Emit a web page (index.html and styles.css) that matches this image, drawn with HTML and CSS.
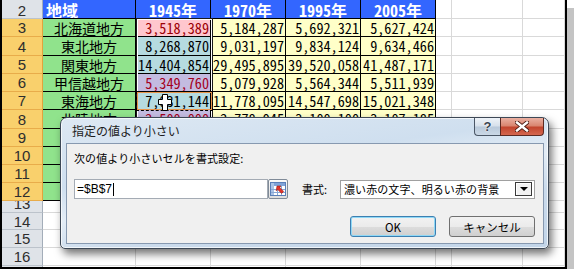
FILE: index.html
```html
<!DOCTYPE html>
<html lang="ja">
<head>
    <meta charset="UTF-8">
    <title>指定の値より小さい</title>
    <link rel="stylesheet" href="styles.css">
</head>
<body>
    <div class="screen">
        <div class="sheet">
            <!-- row 2 -->
            <div class="c rh top">2</div>
            <div class="c t hd lft">地域</div>
            <div class="c t hd">1945年</div>
            <div class="c t hd">1970年</div>
            <div class="c t hd">1995年</div>
            <div class="c t hd">2005年</div>
            <div class="c"></div><div class="c"></div><div class="c"></div>
            <!-- row 3 -->
            <div class="c rh on">3</div>
            <div class="c t area">北海道地方</div>
            <div class="c t n act">3,518,389</div>
            <div class="c t n">5,184,287</div>
            <div class="c t n">5,692,321</div>
            <div class="c t n">5,627,424</div>
            <div class="c"></div><div class="c"></div><div class="c"></div>
            <!-- row 4 -->
            <div class="c rh on">4</div>
            <div class="c t area">東北地方</div>
            <div class="c t n s">8,268,870</div>
            <div class="c t n">9,031,197</div>
            <div class="c t n">9,834,124</div>
            <div class="c t n">9,634,466</div>
            <div class="c"></div><div class="c"></div><div class="c"></div>
            <!-- row 5 -->
            <div class="c rh on">5</div>
            <div class="c t area">関東地方</div>
            <div class="c t n s">14,404,854</div>
            <div class="c t n">29,495,895</div>
            <div class="c t n">39,520,058</div>
            <div class="c t n">41,487,171</div>
            <div class="c"></div><div class="c"></div><div class="c"></div>
            <!-- row 6 -->
            <div class="c rh on">6</div>
            <div class="c t area">甲信越地方</div>
            <div class="c t n bad">5,349,760</div>
            <div class="c t n">5,079,928</div>
            <div class="c t n">5,564,344</div>
            <div class="c t n">5,511,939</div>
            <div class="c"></div><div class="c"></div><div class="c"></div>
            <!-- row 7 -->
            <div class="c rh on">7</div>
            <div class="c t area">東海地方</div>
            <div class="c t n s">7,031,144</div>
            <div class="c t n">11,778,095</div>
            <div class="c t n">14,547,698</div>
            <div class="c t n">15,021,348</div>
            <div class="c"></div><div class="c"></div><div class="c"></div>
            <!-- row 8 -->
            <div class="c rh on">8</div>
            <div class="c t area">北陸地方</div>
            <div class="c t n bad">2,500,000</div>
            <div class="c t n">2,778,945</div>
            <div class="c t n">3,100,100</div>
            <div class="c t n">3,107,185</div>
            <div class="c"></div><div class="c"></div><div class="c"></div>
            <!-- row 9 -->
            <div class="c rh on">9</div>
            <div class="c t area">近畿地方</div>
            <div class="c t n s">11,100,000</div>
            <div class="c t n">18,400,000</div>
            <div class="c t n">22,300,000</div>
            <div class="c t n">22,700,000</div>
            <div class="c"></div><div class="c"></div><div class="c"></div>
            <!-- row 10 -->
            <div class="c rh on">10</div>
            <div class="c t area">中国地方</div>
            <div class="c t n bad">5,500,000</div>
            <div class="c t n">7,100,000</div>
            <div class="c t n">7,700,000</div>
            <div class="c t n">7,600,000</div>
            <div class="c"></div><div class="c"></div><div class="c"></div>
            <!-- row 11 -->
            <div class="c rh on">11</div>
            <div class="c t area">四国地方</div>
            <div class="c t n bad">3,300,000</div>
            <div class="c t n">3,900,000</div>
            <div class="c t n">4,200,000</div>
            <div class="c t n">4,100,000</div>
            <div class="c"></div><div class="c"></div><div class="c"></div>
            <!-- row 12 -->
            <div class="c rh on">12</div>
            <div class="c t area">九州地方</div>
            <div class="c t n s">11,200,000</div>
            <div class="c t n">12,800,000</div>
            <div class="c t n">14,700,000</div>
            <div class="c t n">14,600,000</div>
            <div class="c"></div><div class="c"></div><div class="c"></div>
            <!-- rows 13 - 17 -->
            <div class="c rh cut">13</div>
            <div class="c"></div><div class="c"></div><div class="c"></div><div class="c"></div>
            <div class="c"></div><div class="c"></div><div class="c"></div><div class="c"></div>
            <div class="c rh">14</div>
            <div class="c"></div><div class="c"></div><div class="c"></div><div class="c"></div>
            <div class="c"></div><div class="c"></div><div class="c"></div><div class="c"></div>
            <div class="c rh">15</div>
            <div class="c"></div><div class="c"></div><div class="c"></div><div class="c"></div>
            <div class="c"></div><div class="c"></div><div class="c"></div><div class="c"></div>
            <div class="c rh">16</div>
            <div class="c"></div><div class="c"></div><div class="c"></div><div class="c"></div>
            <div class="c"></div><div class="c"></div><div class="c"></div><div class="c"></div>
            <div class="c rh">17</div>
            <div class="c"></div><div class="c"></div><div class="c"></div><div class="c"></div>
            <div class="c"></div><div class="c"></div><div class="c"></div><div class="c"></div>
        </div>

        <!-- selection and copy marquee -->
        <div class="range"></div>
        <div class="marquee"></div>
        <svg class="cursor" width="14" height="17" viewBox="0 0 14 17">
            <polygon points="4.5,0.5 9.5,0.5 9.5,5.5 13.5,5.5 13.5,10.5 9.5,10.5 9.5,16.5 4.5,16.5 4.5,10.5 0.5,10.5 0.5,5.5 4.5,5.5" fill="#fff" stroke="#000"/>
        </svg>

        <div class="dialog">
            <div class="titlebar">
                <span class="title">指定の値より小さい</span>
                <div class="caps">
                    <span class="cap help">?</span>
                    <span class="cap close">
                        <svg width="14" height="11" viewBox="0 0 14 11">
                            <path d="M2 1.5 L12 9.5 M12 1.5 L2 9.5" stroke="#4a1a12" stroke-width="4.2" stroke-linecap="square"/>
                            <path d="M2 1.5 L12 9.5 M12 1.5 L2 9.5" stroke="#fff" stroke-width="2.4" stroke-linecap="square"/>
                        </svg>
                    </span>
                </div>
            </div>
            <div class="client">
                <p class="prompt">次の値より小さいセルを書式設定:</p>
                <div class="fields">
                    <div class="refedit">=$B$7<span class="caret"></span></div>
                    <span class="collapse">
                        <svg width="16" height="14" viewBox="0 0 16 14">
                            <rect x="0.5" y="0.5" width="15" height="13" fill="#fff" stroke="#5a7fb8"/>
                            <rect x="1" y="1" width="14" height="3" fill="#7fa3d8"/>
                            <rect x="1" y="1" width="3" height="12" fill="#a9c2e6"/>
                            <path d="M1 7.5 H15 M1 10.5 H15 M7.5 4 V13 M11.5 4 V13" stroke="#8aa8d4"/>
                            <path d="M7 4 L11 4 L9.8 5.6 L13.6 9.4 L11.6 11.4 L7.8 7.6 L6.2 8.8 Z" fill="#e0332a" stroke="#a01810" stroke-width="0.6"/>
                        </svg>
                    </span>
                    <span class="lbl">書式:</span>
                    <div class="combo">
                        <span>濃い赤の文字、明るい赤の背景</span>
                        <span class="drop"></span>
                    </div>
                </div>
                <div class="actions">
                    <button class="btn def">OK</button>
                    <button class="btn">キャンセル</button>
                </div>
            </div>
        </div>
    </div>
</body>
</html>
```

FILE: styles.css
```css
body {
    margin: 0;
    background: #fff;
    font-family: "Noto Sans CJK JP", sans-serif;
}
.screen {
    position: relative;
    width: 563px;
    height: 267px;
    border: 2px solid #000;
    border-top: 0;
    overflow: hidden;
    background: #fff;
    box-shadow: 7px 8px 0 #c4c4c4;
}
.sheet {
    display: grid;
    grid-template-columns: 41px 93px 75px 75px 75px 75px 16px 71px 42px;
    grid-template-rows: 22px 18px 19px 18px 18px 18px 19px 18px 18px 18px 18px 12px 17px 18px 18px 18px;
    margin-top: -3px;
}
.c {
    box-sizing: border-box;
    display: flex;
    align-items: center;
    overflow: hidden;
    white-space: nowrap;
    border-right: 1px solid #d9d9d9;
    border-bottom: 1px solid #d9d9d9;
}
.rh {
    justify-content: center;
    font: 15px "Liberation Sans", sans-serif;
    color: #2e2e2e;
    background: #dfe3e8;
    border-right-color: #a3adb9;
    border-bottom-color: #bcc3cb;
}
.rh.top {
    padding-top: 6px;
}
.rh.on {
    background: #f9d06c;
    border-right-color: #e3a23c;
    border-bottom-color: #e8ac4a;
}
.rh.cut {
    align-items: flex-end;
    line-height: 17px;
}
.t {
    border-color: #000;
}
.hd {
    justify-content: center;
    background: #3366ff;
    color: #fff;
    font-size: 16px;
    font-weight: bold;
    font-feature-settings: "hwid";
    padding-top: 5px;
}
.hd.lft {
    justify-content: flex-start;
    padding-left: 3px;
}
.area {
    justify-content: center;
    background: #90e38c;
    font-size: 14px;
}
.n {
    justify-content: flex-end;
    padding-right: 1px;
    background: #ffffc8;
    font-size: 14.2px;
    font-feature-settings: "hwid";
    color: #000;
}
.n.s {
    background: #b6dbe0;
}
.n.bad {
    background: #c3bbe0;
    color: #a3001c;
}
.n.act {
    background: #ffc7ce;
    color: #9c0006;
}

.range {
    position: absolute;
    left: 134px;
    top: 18px;
    width: 77px;
    height: 184px;
    box-sizing: border-box;
    border: 1px solid #1a1a1a;
    box-shadow: inset 0 0 0 1px #fff;
}
.marquee {
    position: absolute;
    left: 134px;
    top: 91px;
    width: 77px;
    height: 20px;
    box-sizing: border-box;
    border: 1px dashed #000;
    box-shadow: inset 0 0 0 1px #e9954a;
}
.cursor {
    position: absolute;
    left: 156px;
    top: 94px;
}

/* dialog */
.dialog {
    position: absolute;
    left: 58px;
    top: 117px;
    width: 489px;
    height: 132px;
    box-sizing: border-box;
    display: flex;
    flex-direction: column;
    padding: 0 4px 4px 5px;
    border: 1px solid #3d4856;
    border-radius: 7px 7px 5px 5px;
    background: linear-gradient(172deg, #dde8f3 0%, #cfdfef 35%, #e4edf6 52%, #cbdbec 70%, #c2d5e9 100%);
    box-shadow: 3px 5px 9px rgba(0, 0, 0, 0.55), inset 0 0 0 1px rgba(255, 255, 255, 0.7);
}
.titlebar {
    height: 25px;
    display: flex;
    align-items: flex-start;
}
.title {
    padding-left: 6px;
    font-size: 12px;
    line-height: 26px;
    color: #1c1c1c;
}
.caps {
    margin-left: auto;
    display: flex;
}
.cap {
    box-sizing: border-box;
    height: 18px;
    display: flex;
    align-items: center;
    justify-content: center;
    border: 1px solid #4a5666;
    border-top: 0;
}
.cap.help {
    width: 26px;
    border-right: 0;
    border-radius: 0 0 0 4px;
    background: linear-gradient(#eef3f8, #d6e0eb 48%, #b9c9da 52%, #cad8e6);
    font: bold 13px "Liberation Sans", sans-serif;
    color: #3a4552;
    text-shadow: 0 0 2px #fff, 0 0 1px #fff;
}
.cap.close {
    width: 44px;
    border-color: #5c2a22;
    border-radius: 0 0 4px 0;
    background: linear-gradient(#eab0a2, #d98570 46%, #c2452e 54%, #d4674f);
}
.client {
    flex: 1;
    border: 1px solid #8799b0;
    background: #f0f0f0;
    padding: 7px 8px 0 7px;
}
.prompt {
    margin: 0;
    font-size: 11px;
    line-height: 14px;
    letter-spacing: 0.1px;
    color: #000;
}
.fields {
    display: flex;
    align-items: center;
    height: 20px;
    margin-top: 14px;
    font-size: 11px;
}
.refedit {
    box-sizing: border-box;
    width: 195px;
    height: 20px;
    display: flex;
    align-items: center;
    padding-left: 2px;
    border: 1px solid #a4abb4;
    background: #fff;
    font: 12px "Liberation Sans", sans-serif;
}
.caret {
    width: 1px;
    height: 13px;
    margin-left: 1px;
    background: #000;
}
.collapse {
    box-sizing: border-box;
    width: 20px;
    height: 20px;
    display: flex;
    align-items: center;
    justify-content: center;
    border: 1px solid #808b98;
    border-radius: 2px;
    background: linear-gradient(#fafafa, #dedede);
}
.lbl {
    flex-shrink: 0;
    width: 30px;
    margin-left: 14px;
    margin-right: 8px;
    white-space: nowrap;
}
.combo {
    box-sizing: border-box;
    width: 196px;
    height: 19px;
    display: flex;
    align-items: center;
    padding-left: 3px;
    border: 1px solid #a0a0a0;
    background: #fff;
    letter-spacing: 0.1px;
    white-space: nowrap;
}
.drop {
    position: relative;
    box-sizing: border-box;
    flex-shrink: 0;
    width: 17px;
    height: 14px;
    margin-left: auto;
    margin-right: 2px;
    border: 1px solid #3a3a3a;
    background: #f2f2f2;
    box-shadow: inset 1px 1px 0 #fff;
}
.drop::after {
    content: "";
    position: absolute;
    left: 4px;
    top: 4px;
    border-left: 4px solid transparent;
    border-right: 4px solid transparent;
    border-top: 4px solid #000;
}
.actions {
    display: flex;
    justify-content: flex-end;
    gap: 13px;
    margin-top: 17px;
}
.btn {
    box-sizing: border-box;
    width: 86px;
    height: 21px;
    padding: 0;
    border: 1px solid #707070;
    border-radius: 3px;
    background: linear-gradient(#f2f2f2 0%, #ebebeb 50%, #dddddd 50%, #cfcfcf 100%);
    font: 11.5px "Noto Sans CJK JP", sans-serif;
    color: #000;
}
.btn.def {
    border-color: #3c7fb1;
    box-shadow: inset 0 0 0 1px #8fd8f6;
}
```
